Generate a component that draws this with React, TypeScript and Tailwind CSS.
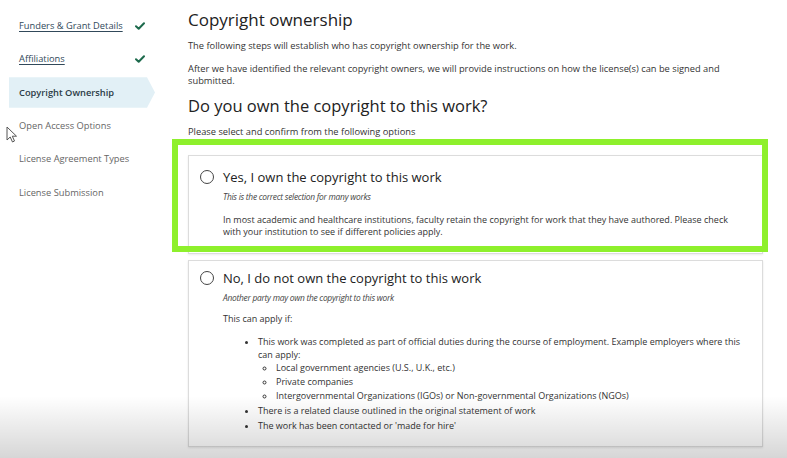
const navItems = [
  { label: "Funders & Grant Details", done: true },
  { label: "Affiliations", done: true },
  { label: "Copyright Ownership", active: true },
  { label: "Open Access Options" },
  { label: "License Agreement Types" },
  { label: "License Submission" },
];

function Check() {
  return (
    <svg width="10" height="8" viewBox="0 0 10 8" fill="none">
      <path d="M1 4.2 3.7 6.8 9 1.2" stroke="#1d6a4c" strokeWidth="2" strokeLinecap="round" strokeLinejoin="round" />
    </svg>
  );
}

function Radio() {
  return <span className="mt-[2px] block h-[14px] w-[14px] shrink-0 rounded-full border border-[#444] bg-white" />;
}

function Sidebar() {
  return (
    <aside className="w-[165px] shrink-0 pt-[9px]">
      {navItems.map((item) =>
        item.active ? (
          <div
            key={item.label}
            className="my-[1.5px] ml-[9px] flex h-[30.5px] w-[146px] items-center bg-[#e2f0f6] pl-[10px] text-[9.3px] font-semibold text-[#2c3c47] [clip-path:polygon(0_0,138px_0,146px_50%,138px_100%,0_100%)]"
          >
            {item.label}
          </div>
        ) : (
          <div key={item.label} className="flex h-[33.4px] items-center pl-[19px] pr-[20px] text-[9.3px]">
            {item.done ? (
              <>
                <span className="text-[#31495a] underline decoration-[#31495a] underline-offset-2">{item.label}</span>
                <span className="ml-auto">
                  <Check />
                </span>
              </>
            ) : (
              <span className="text-[#666]">{item.label}</span>
            )}
          </div>
        )
      )}
    </aside>
  );
}

export default function App() {
  return (
    <div className="relative h-[458px] w-[787px] overflow-hidden bg-white text-[#333] [font-family:'Open_Sans',Arial,sans-serif]">
      <div className="flex">
        <Sidebar />
        <main className="w-[598px] pl-[23px] pt-[8px]">
          <h1 className="text-[17px] leading-[24px] text-[#222]">Copyright ownership</h1>
          <p className="mt-[8px] text-[9.3px] leading-[12px]">
            The following steps will establish who has copyright ownership for the work.
          </p>
          <p className="mt-[11px] text-[9.3px] leading-[12px]">
            After we have identified the relevant copyright owners, we will provide instructions on how the license(s) can be signed and submitted.
          </p>
          <h2 className="mt-[7px] text-[16.5px] leading-[24px] text-[#222]">Do you own the copyright to this work?</h2>
          <p className="mt-[8px] text-[9.3px] leading-[12px]">Please select and confirm from the following options</p>

          <div className="relative mt-[17px]">
            <div className="border border-[#dcdcdc] bg-white pb-[15px] pl-[11px] pr-[16px] pt-[12px] shadow-[0_1px_2px_rgba(0,0,0,0.08)]">
              <div className="flex items-start gap-[9px]">
                <Radio />
                <div>
                  <div className="text-[13px] leading-[18px] text-[#222]">Yes, I own the copyright to this work</div>
                  <div className="mt-[5px] text-[8.4px] italic leading-[11px] tracking-[-0.25px] text-[#444]">This is the correct selection for many works</div>
                  <p className="mt-[11.5px] text-[9px] leading-[12px]">
                    In most academic and healthcare institutions, faculty retain the copyright for work that they have authored. Please check with your institution to see if different policies apply.
                  </p>
                </div>
              </div>
            </div>
            <div className="pointer-events-none absolute -left-[16px] -right-[5px] -top-[16px] bottom-[2px] border-[6px] border-[#8ef02c]" />
          </div>

          <div className="mt-[6px] h-[187px] border border-[#dcdcdc] bg-white pl-[11px] pr-[16px] pt-[8px] shadow-[0_1px_2px_rgba(0,0,0,0.1)]">
            <div className="flex items-start gap-[9px]">
              <Radio />
              <div>
                <div className="text-[13px] leading-[18px] text-[#222]">No, I do not own the copyright to this work</div>
                <div className="mt-[5px] text-[8.4px] italic leading-[11px] tracking-[-0.25px] text-[#444]">Another party may own the copyright to this work</div>
                <p className="mt-[10.5px] text-[9px] leading-[12px]">This can apply if:</p>
                <ul className="mt-[9.5px] list-disc pl-[35px] text-[9px] leading-[13px] marker:text-[#333]">
                  <li>
                    This work was completed as part of official duties during the course of employment. Example employers where this can apply:
                    <ul className="list-[circle] pl-[18px] leading-[14px]">
                      <li>Local government agencies (U.S., U.K., etc.)</li>
                      <li>Private companies</li>
                      <li>Intergovernmental Organizations (IGOs) or Non-governmental Organizations (NGOs)</li>
                    </ul>
                  </li>
                  <li className="leading-[15px]">There is a related clause outlined in the original statement of work</li>
                  <li className="leading-[15px]">The work has been contacted or 'made for hire'</li>
                </ul>
              </div>
            </div>
          </div>
        </main>
      </div>

      <svg className="absolute left-[6px] top-[126px]" width="12" height="18" viewBox="0 0 12 18" fill="none">
        <path d="M1 1v13l3.2-3 2.3 5 2-1-2.2-4.8H10.5Z" fill="#fff" stroke="#555" strokeWidth="1" strokeLinejoin="round" />
      </svg>

      <div className="pointer-events-none absolute inset-x-0 bottom-0 h-[62px] bg-linear-to-b from-transparent to-[rgba(0,0,0,0.16)]" />
    </div>
  );
}
